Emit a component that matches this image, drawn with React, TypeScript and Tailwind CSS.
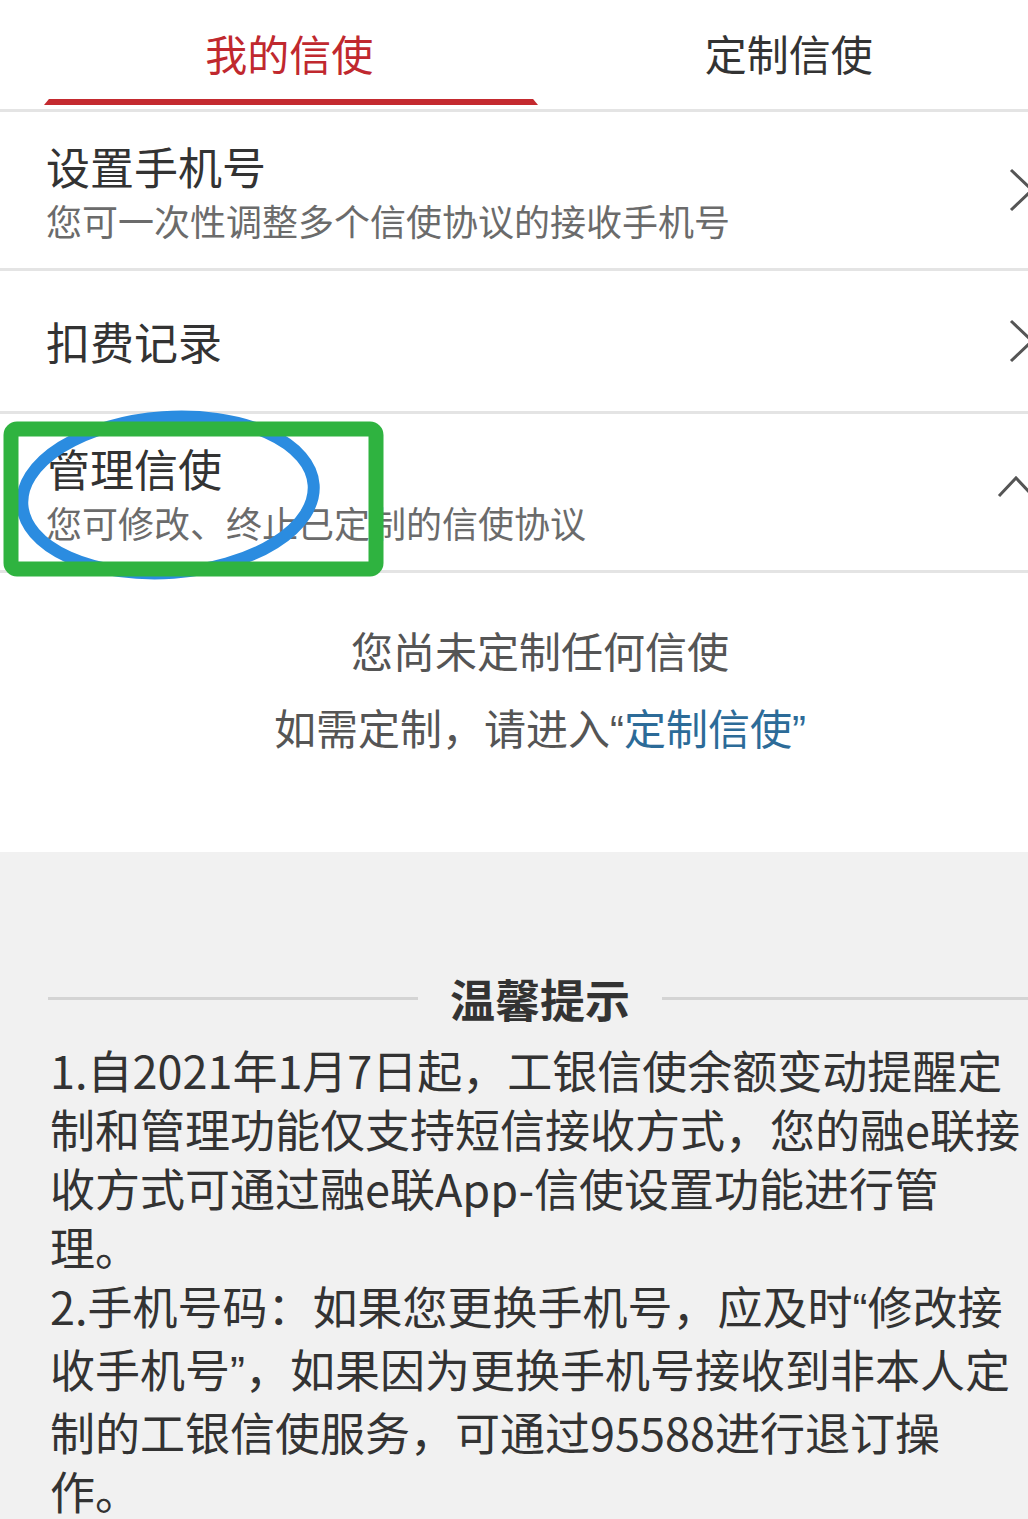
import React from "react";

function ChevronRight() {
    return (
        <svg width="30" height="44" viewBox="0 0 30 44" className="shrink-0 -mr-[8px]">
            <path d="M5 2 L26 22 L5 42" fill="none" stroke="#555" strokeWidth="3" />
        </svg>
    );
}

function ChevronUp() {
    return (
        <svg width="40" height="26" viewBox="0 0 40 26" className="shrink-0 -mr-[8px] -mt-[10px]">
            <path d="M3 22 L20 4 L37 22" fill="none" stroke="#555" strokeWidth="3" />
        </svg>
    );
}

// narrow curly quotes, as the phone font draws them
function Q({ children }: { children: React.ReactNode }) {
    return <span className="font-['Liberation_Sans',sans-serif]">{children}</span>;
}

export default function App() {
    return (
        <main className="relative w-[1028px] min-h-[1519px] overflow-hidden bg-[#f1f1f1] font-['Noto_Sans_CJK_SC','Noto_Sans',sans-serif]">
            <div className="bg-white">
                {/* Tabs */}
                <div className="flex pl-[43px] h-[109px]">
                    <div className="relative w-[498px] flex items-center justify-center pb-[4px]">
                        <span className="text-[42px] leading-[54px] text-[#c0282e]">我的信使</span>
                        <div className="absolute left-[1px] bottom-[4px] w-[494px] h-[6px] bg-[#c42a2f] [clip-path:polygon(1%_0,99%_0,100%_100%,0_100%)]"></div>
                    </div>
                    <div className="w-[498px] flex items-center justify-center pb-[4px] pl-[14px]">
                        <span className="text-[42px] leading-[54px] text-[#333]">定制信使</span>
                    </div>
                </div>
                <div className="h-[3px] bg-[#e4e4e4]"></div>

                {/* 设置手机号 */}
                <div className="h-[156px] flex items-center justify-between pl-[46px]">
                    <div className="flex flex-col pt-[6px]">
                        <span className="text-[44px] leading-[54px] text-[#333]">设置手机号</span>
                        <span className="text-[36px] leading-[54px] text-[#6b6b6b]">您可一次性调整多个信使协议的接收手机号</span>
                    </div>
                    <ChevronRight />
                </div>
                <div className="h-[3px] bg-[#e4e4e4]"></div>

                {/* 扣费记录 */}
                <div className="h-[140px] flex items-center justify-between pl-[46px]">
                    <span className="text-[44px] leading-[54px] text-[#333]">扣费记录</span>
                    <ChevronRight />
                </div>
                <div className="h-[3px] bg-[#e4e4e4]"></div>

                {/* 管理信使 */}
                <div className="h-[156px] flex items-center justify-between pl-[46px]">
                    <div className="flex flex-col pt-[6px]">
                        <span className="text-[44px] leading-[54px] text-[#333]">管理信使</span>
                        <span className="text-[36px] leading-[54px] text-[#6b6b6b]">您可修改、终止已定制的信使协议</span>
                    </div>
                    <ChevronUp />
                </div>
                <div className="h-[3px] bg-[#e4e4e4]"></div>

                {/* Empty state */}
                <div className="h-[279px] flex flex-col items-center pt-[47px] pl-[52px]">
                    <span className="text-[42px] leading-[60px] text-[#555]">您尚未定制任何信使</span>
                    <span className="mt-[17px] text-[42px] leading-[60px] text-[#555]">
                        如需定制，请进入<Q>“</Q><span className="text-[#2c6b98]">定制信使<Q>”</Q></span>
                    </span>
                </div>
            </div>

            {/* 温馨提示 */}
            <div className="pt-[117px] pl-[48px]">
                <div className="flex items-center gap-[32px]">
                    <div className="w-[370px] h-[3px] bg-[#d4d4d4]"></div>
                    <span className="text-[45px] leading-[59px] font-bold text-[#333]">温馨提示</span>
                    <div className="flex-1 h-[3px] bg-[#d4d4d4]"></div>
                </div>
                <div className="mt-[12px] pl-[2px] text-[45px] leading-[59px] text-[#333] whitespace-nowrap">
                    <div>1.自2021年1月7日起，工银信使余额变动提醒定</div>
                    <div>制和管理功能仅支持短信接收方式，您的融e联接</div>
                    <div>收方式可通过融e联App-信使设置功能进行管</div>
                    <div>理。</div>
                    <div>2.手机号码：如果您更换手机号，应及时<Q>“</Q>修改接</div>
                    <div>收手机号<Q>”</Q>，如果因为更换手机号接收到非本人定</div>
                    <div>制的工银信使服务，可通过95588进行退订操</div>
                    <div>作。</div>
                </div>
            </div>

            {/* Annotation marks */}
            <svg className="absolute left-0 top-[400px] pointer-events-none" width="400" height="190" viewBox="0 0 400 190">
                <ellipse cx="168" cy="95" rx="146" ry="78" fill="none" stroke="#2b8ce0" strokeWidth="12" transform="rotate(-4 168 95)" />
                <rect x="11" y="29" width="365" height="140" rx="6" fill="none" stroke="#2fb340" strokeWidth="15" />
            </svg>
        </main>
    );
}
